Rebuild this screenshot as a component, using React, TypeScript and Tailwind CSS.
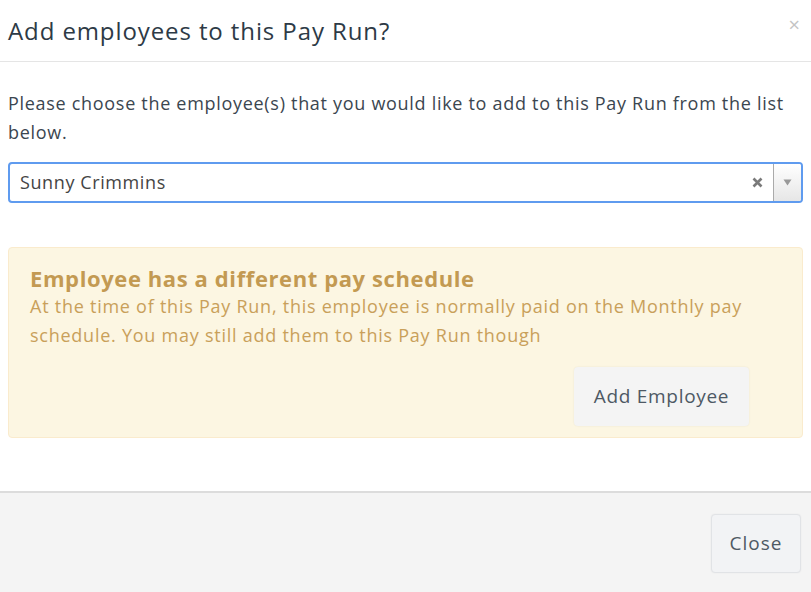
import React from "react";

export default function App() {
  return (
    <div
      className="w-[811px] h-[592px] bg-white flex flex-col overflow-hidden"
      style={{ fontFamily: "'Open Sans', sans-serif" }}
    >
      <div className="h-[62px] flex items-center justify-between pl-[8px] pr-[11px] border-b border-[#e5e5e5] shrink-0">
        <h1 className="text-[24px] text-[#2d3a46] tracking-[0.9px]">Add employees to this Pay Run?</h1>
        <span className="text-[20px] text-[#c4c4c4] leading-none -mt-[12px]">×</span>
      </div>
      <div className="flex-1 px-[8px] pt-[27px]">
        <p className="text-[18px] leading-[29px] text-[#3b4650] tracking-[0.7px]">
          Please choose the employee(s) that you would like to add to this Pay Run from the list below.
        </p>
        <div className="mt-[15px] h-[41px] rounded-[4px] border-2 border-[#5f9bef] flex items-center">
          <span className="flex-1 pl-[10px] text-[18px] text-[#444] tracking-[0.6px]">Sunny Crimmins</span>
          <span className="w-[32px] flex items-center justify-center text-[#777]">
            <svg width="11" height="11" viewBox="0 0 11 11">
              <path d="M1.5 1.5 L9.5 9.5 M9.5 1.5 L1.5 9.5" stroke="#7a7a7a" strokeWidth="2.6" />
            </svg>
          </span>
          <span className="w-[28px] h-full border-l border-[#aaa] bg-gradient-to-b from-white to-[#e6e6e6] flex items-center justify-center rounded-r-[2px]">
            <svg width="9" height="7" viewBox="0 0 9 7">
              <path d="M0.5 0.5 L8.5 0.5 L4.5 6.5 Z" fill="#999" />
            </svg>
          </span>
        </div>
        <div className="mt-[44px] rounded-[4px] border border-[#faebcd] bg-[#fcf6e2] pl-[21px] pr-[40px] pt-[17px] pb-[11px]">
          <h2 className="text-[22px] font-bold text-[#c39a52] leading-[26px] tracking-[0.6px]">
            Employee has a different pay schedule
          </h2>
          <p className="text-[18px] leading-[29px] text-[#c9a05a] mt-[1px] tracking-[0.75px]">
            At the time of this Pay Run, this employee is normally paid on the Monthly pay schedule. You may still add them to this Pay Run though
          </p>
          <div className="flex justify-end mt-[17px] pr-[13px]">
            <button className="h-[59px] w-[175px] rounded-[4px] bg-[#f4f4f4] text-[19px] text-[#4e5964] tracking-[0.7px] shadow-[0_0_2px_rgba(0,0,0,0.08)]">
              Add Employee
            </button>
          </div>
        </div>
      </div>
      <div className="h-[101px] shrink-0 border-t-2 border-[#dcdcdc] bg-[#f4f4f4] flex justify-end items-start pt-[21px] pr-[10px]">
        <button className="h-[59px] w-[90px] rounded-[4px] border border-[#e1e3e6] bg-[#f2f3f5] text-[19px] text-[#4e5964] tracking-[1px] shadow-[0_0_2px_rgba(0,0,0,0.06)]">
          Close
        </button>
      </div>
    </div>
  );
}
